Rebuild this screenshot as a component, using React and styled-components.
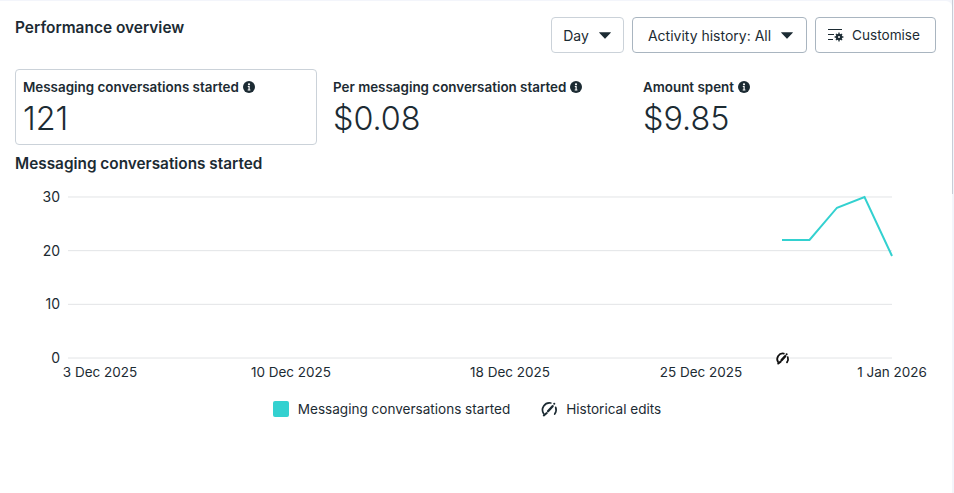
import React from 'react';
import styled, { createGlobalStyle } from 'styled-components';

const TEXT = '#1c2b33';
const FONT = '"Inter", "Noto Sans", "Liberation Sans", sans-serif';

const GlobalStyle = createGlobalStyle`
  html, body { margin: 0; padding: 0; background: #fff; }
  body { font-family: ${FONT}; color: ${TEXT}; width: 954px; height: 493px; overflow: hidden; }
`;

const Page = styled.div`
  display: flex;
  width: 954px;
  height: 493px;
  background: #f3f5fb;
  padding-top: 1px;
  box-sizing: border-box;
`;

const Panel = styled.div`
  flex: 1;
  min-width: 0;
  background: #fff;
  border-top-right-radius: 6px;
  padding: 16px 15px 0 15px;
  box-sizing: border-box;
`;

const ScrollTrack = styled.div`
  width: 2px;
  margin-top: -1px;
`;

const ScrollThumb = styled.div`
  width: 1px;
  height: 194px;
  background: #c8cdd6;
`;

const Header = styled.div`
  display: flex;
  justify-content: space-between;
  align-items: flex-start;
  height: 36px;
`;

const Title = styled.h2`
  margin: 0;
  padding-top: 2px;
  font-size: 15.45px;
  line-height: 18px;
  font-weight: 600;
`;

const Actions = styled.div`
  display: flex;
  gap: 8px;
  margin-right: 1px;
`;

const Button = styled.button`
  display: flex;
  align-items: center;
  justify-content: center;
  gap: ${({ $gap }) => $gap || 10}px;
  width: ${({ $width }) => $width}px;
  height: 36px;
  padding: 0 ${({ $padRight }) => $padRight || 0}px 0 ${({ $padLeft }) => $padLeft || 0}px;
  background: #fff;
  border: 1px solid ${({ $strong }) => ($strong ? '#a9b5c0' : '#cbd2d9')};
  border-radius: 4px;
  color: ${TEXT};
  font-family: ${FONT};
  font-size: ${({ $size }) => $size || 14}px;
`;

const Cards = styled.div`
  display: grid;
  grid-template-columns: repeat(3, 302px);
  gap: 8px;
  margin-top: 16px;
`;

const Card = styled.div`
  height: 76px;
  padding: 9px 7px 0;
  box-sizing: border-box;
  border: 1px solid ${({ $active }) => ($active ? '#cbd2d9' : 'transparent')};
  border-radius: 4px;
`;

const CardLabel = styled.div`
  display: flex;
  align-items: center;
  gap: 4px;
  font-size: 13.4px;
  line-height: 16px;
  font-weight: 600;
`;

const CardValue = styled.div`
  font-size: 32.3px;
  line-height: 38px;
  font-weight: 300;
  margin-top: 5px;
`;

const ChartTitle = styled.h3`
  margin: 10px 0 0;
  font-size: 15.35px;
  line-height: 18px;
  font-weight: 600;
`;

const Chart = styled.svg`
  display: block;
  margin: 0 0 0 -15px;
`;

const AxisText = styled.text`
  font-family: ${FONT};
  font-size: ${({ $size }) => $size}px;
  fill: ${TEXT};
`;

const Legend = styled.div`
  display: flex;
  justify-content: center;
  align-items: center;
  gap: 31px;
  margin: 15px 0 0 -18px;
  font-size: 13.55px;
  line-height: 18px;
`;

const LegendItem = styled.div`
  display: flex;
  align-items: center;
  gap: ${({ $gap }) => $gap}px;
`;

const Swatch = styled.span`
  width: 16px;
  height: 16px;
  border-radius: 2px;
  background: #33d1d0;
`;

const Info = () => (
  <svg width="12" height="12" viewBox="0 0 12 12">
    <circle cx="6" cy="6" r="6" fill={TEXT} />
    <circle cx="6" cy="3.3" r="1.1" fill="#fff" />
    <path d="M4.8 5h1.9v3.4h.7v1H4.7v-1h.8V6h-.7z" fill="#fff" />
  </svg>
);

const Caret = () => (
  <svg width="12" height="7" viewBox="0 0 12 7">
    <path d="M0.4 0.3h11.2a.3.3 0 0 1 .2.5L6.3 6.5a.4.4 0 0 1-.6 0L.2 .8a.3.3 0 0 1 .2-.5z" fill={TEXT} />
  </svg>
);

const CustomiseIcon = () => (
  <svg width="16" height="14" viewBox="0 0 16 14">
    <path d="M0 1.5h14M0 6.5h6M0 11.5h5" stroke={TEXT} strokeWidth="1" fill="none" />
    <circle cx="11" cy="9" r="3.2" fill={TEXT} />
    <circle cx="11" cy="9" r="1" fill="#fff" />
    <path d="M11 4.6v1.4M11 12v1.4M6.6 9H8M14 9h1.4M7.9 5.9l1 1M13.1 11.1l1 1M7.9 12.1l1-1M13.1 6.9l1-1" stroke={TEXT} strokeWidth="1.3" />
  </svg>
);

const GaugePaths = ({ color, width }) => (
  <g fill="none" stroke={color} strokeWidth={width} strokeLinecap="round">
    <path d="M2.6 12.6A7 7 0 0 1 9.8 2" />
    <path d="M14.7 6.4a7 7 0 0 1-1 6.6" />
    <path d="M7 10.2l4.6-5" strokeWidth={width + 0.7} />
    <path d="M13.2 2.8l.1 0" strokeWidth={width + 0.3} />
    <path d="M2.8 14.4l3-2.4" strokeWidth={width + 0.3} />
  </g>
);

const GaugeIcon = () => (
  <svg width="17" height="17" viewBox="0 0 17 17">
    <GaugePaths color={TEXT} width={1.7} />
  </svg>
);

const metrics = [
  { label: 'Messaging conversations started', value: '121', active: true },
  { label: 'Per messaging conversation started', value: '$0.08' },
  { label: 'Amount spent', value: '$9.85' },
];

const ZERO_Y = 358;
const UNIT = 5.367;
const toY = (v) => ZERO_Y - v * UNIT;

const yTicks = [30, 20, 10, 0];

const xTicks = [
  { label: '3 Dec 2025', x: 100 },
  { label: '10 Dec 2025', x: 291 },
  { label: '18 Dec 2025', x: 510 },
  { label: '25 Dec 2025', x: 701 },
  { label: '1 Jan 2026', x: 892 },
];

const series = [
  [782, 22],
  [809.5, 22],
  [837, 28],
  [864.5, 30],
  [892, 19],
];

// chart is drawn in page coords, top of the svg sits at y=173
const CHART_TOP = 173;

export default function App() {
  return (
    <Page>
      <GlobalStyle />
      <Panel>
        <Header>
          <Title>Performance overview</Title>
          <Actions>
            <Button $width={73} $gap={10} $padRight={1}>Day <Caret /></Button>
            <Button $width={175} $gap={10} $padLeft={2} $strong>Activity history: All <Caret /></Button>
            <Button $width={121} $gap={8} $size={13.6} $padRight={3} $strong><CustomiseIcon /> Customise</Button>
          </Actions>
        </Header>

        <Cards>
          {metrics.map((m) => (
            <Card key={m.label} $active={m.active}>
              <CardLabel>{m.label} <Info /></CardLabel>
              <CardValue>{m.value}</CardValue>
            </Card>
          ))}
        </Cards>

        <ChartTitle>Messaging conversations started</ChartTitle>

        <Chart width="952" height="212" viewBox={`0 ${CHART_TOP} 952 212`}>
          {yTicks.map((v) => (
            <g key={v}>
              <line x1="68" x2="892" y1={toY(v)} y2={toY(v)} stroke="#e2e4e6" />
              <AxisText $size={14} x="60" y={toY(v) + 5} textAnchor="end">{v}</AxisText>
            </g>
          ))}
          {xTicks.map((t) => (
            <AxisText $size={13.5} key={t.label} x={t.x} y={377} textAnchor="middle">{t.label}</AxisText>
          ))}
          <polyline
            points={series.map(([x, v]) => `${x},${toY(v)}`).join(' ')}
            fill="none"
            stroke="#33d1d0"
            strokeWidth="2"
          />
          <g transform="translate(776 352) scale(0.8)">
            <rect x="0" y="4" width="17" height="6" fill="#fff" />
            <GaugePaths color="#111" width={2.2} />
          </g>
        </Chart>

        <Legend>
          <LegendItem $gap={9}>
            <Swatch />
            Messaging conversations started
          </LegendItem>
          <LegendItem $gap={8}>
            <GaugeIcon />
            Historical edits
          </LegendItem>
        </Legend>
      </Panel>
      <ScrollTrack>
        <ScrollThumb />
      </ScrollTrack>
    </Page>
  );
}
